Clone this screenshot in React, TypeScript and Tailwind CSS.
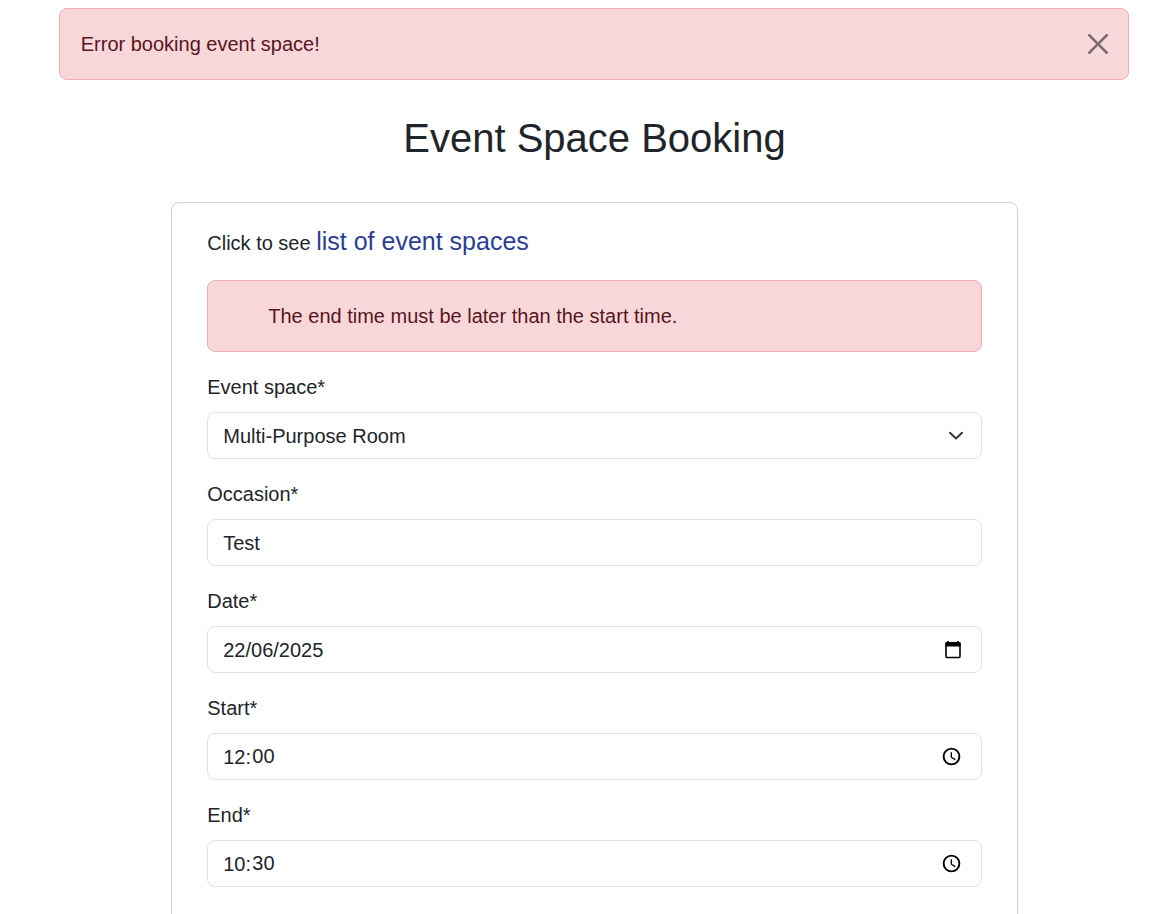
import type { ReactNode } from "react";

function CloseIcon() {
  return (
    <svg className="size-5 opacity-50" viewBox="0 0 16 16" fill="#000">
      <path d="M.293.293a1 1 0 0 1 1.414 0L8 6.586 14.293.293a1 1 0 1 1 1.414 1.414L9.414 8l6.293 6.293a1 1 0 0 1-1.414 1.414L8 9.414l-6.293 6.293a1 1 0 0 1-1.414-1.414L6.586 8 .293 1.707a1 1 0 0 1 0-1.414z" />
    </svg>
  );
}

function ChevronIcon() {
  return (
    <svg className="mr-[2px] h-[15px] w-4" viewBox="0 0 16 15" fill="none" stroke="#343a40" strokeWidth="2" strokeLinecap="round" strokeLinejoin="round">
      <path d="m2 4.700 6 5.700 6-5.700" />
    </svg>
  );
}

function CalendarIcon() {
  return (
    <svg className="mr-[3px] size-5" viewBox="0 0 20 20" fill="none">
      <path d="M5.100 1v3M15 1v3" stroke="#000" strokeWidth="1.700" />
      <rect x="3" y="2.800" width="14" height="14.700" rx="1" stroke="#000" strokeWidth="1.600" />
      <path d="M2.500 2.500h15v4h-15z" fill="#000" />
    </svg>
  );
}

function ClockIcon() {
  return (
    <svg className="mr-[4px] size-[21px]" viewBox="0 0 24 24" fill="none" stroke="#000">
      <circle cx="12" cy="12" r="9" strokeWidth="2.200" />
      <path d="M11.800 7v5.800l4.500 2.700" strokeWidth="1.500" />
    </svg>
  );
}

function Field({ label, icon, children }: { label: string; icon?: ReactNode; children: ReactNode }) {
  return (
    <div className="mb-5">
      <div className="mb-[10px] pl-[0.75px] leading-[30px]">{label}</div>
      <div className="flex h-[47px] items-center justify-between rounded-[8px] border border-[#dee2e6] bg-white pr-[15px] pl-[15.75px]">
        <div className="flex leading-[30px]">{children}</div>
        {icon}
      </div>
    </div>
  );
}

function Time({ hours, minutes }: { hours: string; minutes: string }) {
  return (
    <>
      <span className="pt-px">{hours}:</span>
      <span className="pb-px pl-[1.25px]">{minutes}</span>
    </>
  );
}

export default function App() {
  return (
    <div className="h-[914px] overflow-hidden bg-white pt-2 pr-[26px] pl-[59px] font-['Liberation_Sans',Arial,sans-serif] text-[20px] leading-[30px] text-[#212529]">
      <div className="flex h-[72px] items-center justify-between rounded-[8px] border border-[#f1aeb5] bg-[#f8d7da] pr-5 pl-[20.75px] text-[#58151c]">
        <span>Error booking event space!</span>
        <button aria-label="Close"><CloseIcon /></button>
      </div>
      <h1 className="mt-[34px] pl-px text-center text-[40px] leading-[48px]">Event Space Booking</h1>
      <main className="mx-auto mt-10 h-[900px] w-[847px] rounded-[8px] border border-[#d0d1d2] px-[35px] pt-5">
        <p className="mb-5 h-[37px] pl-[0.75px] leading-[37px]">
          Click to see <a className="text-[25px] text-[#2c3e94]">list of event spaces</a>
        </p>
        <div className="mb-5 flex h-[72px] items-center rounded-[8px] border border-[#f1aeb5] bg-[#f8d7da] pl-[60.75px] text-[#58151c]">
          The end time must be later than the start time.
        </div>
        <Field label="Event space*" icon={<ChevronIcon />}>Multi-Purpose Room</Field>
        <Field label="Occasion*">Test</Field>
        <Field label="Date*" icon={<CalendarIcon />}>22/06/2025</Field>
        <Field label="Start*" icon={<ClockIcon />}><Time hours="12" minutes="00" /></Field>
        <Field label="End*" icon={<ClockIcon />}><Time hours="10" minutes="30" /></Field>
      </main>
    </div>
  );
}
